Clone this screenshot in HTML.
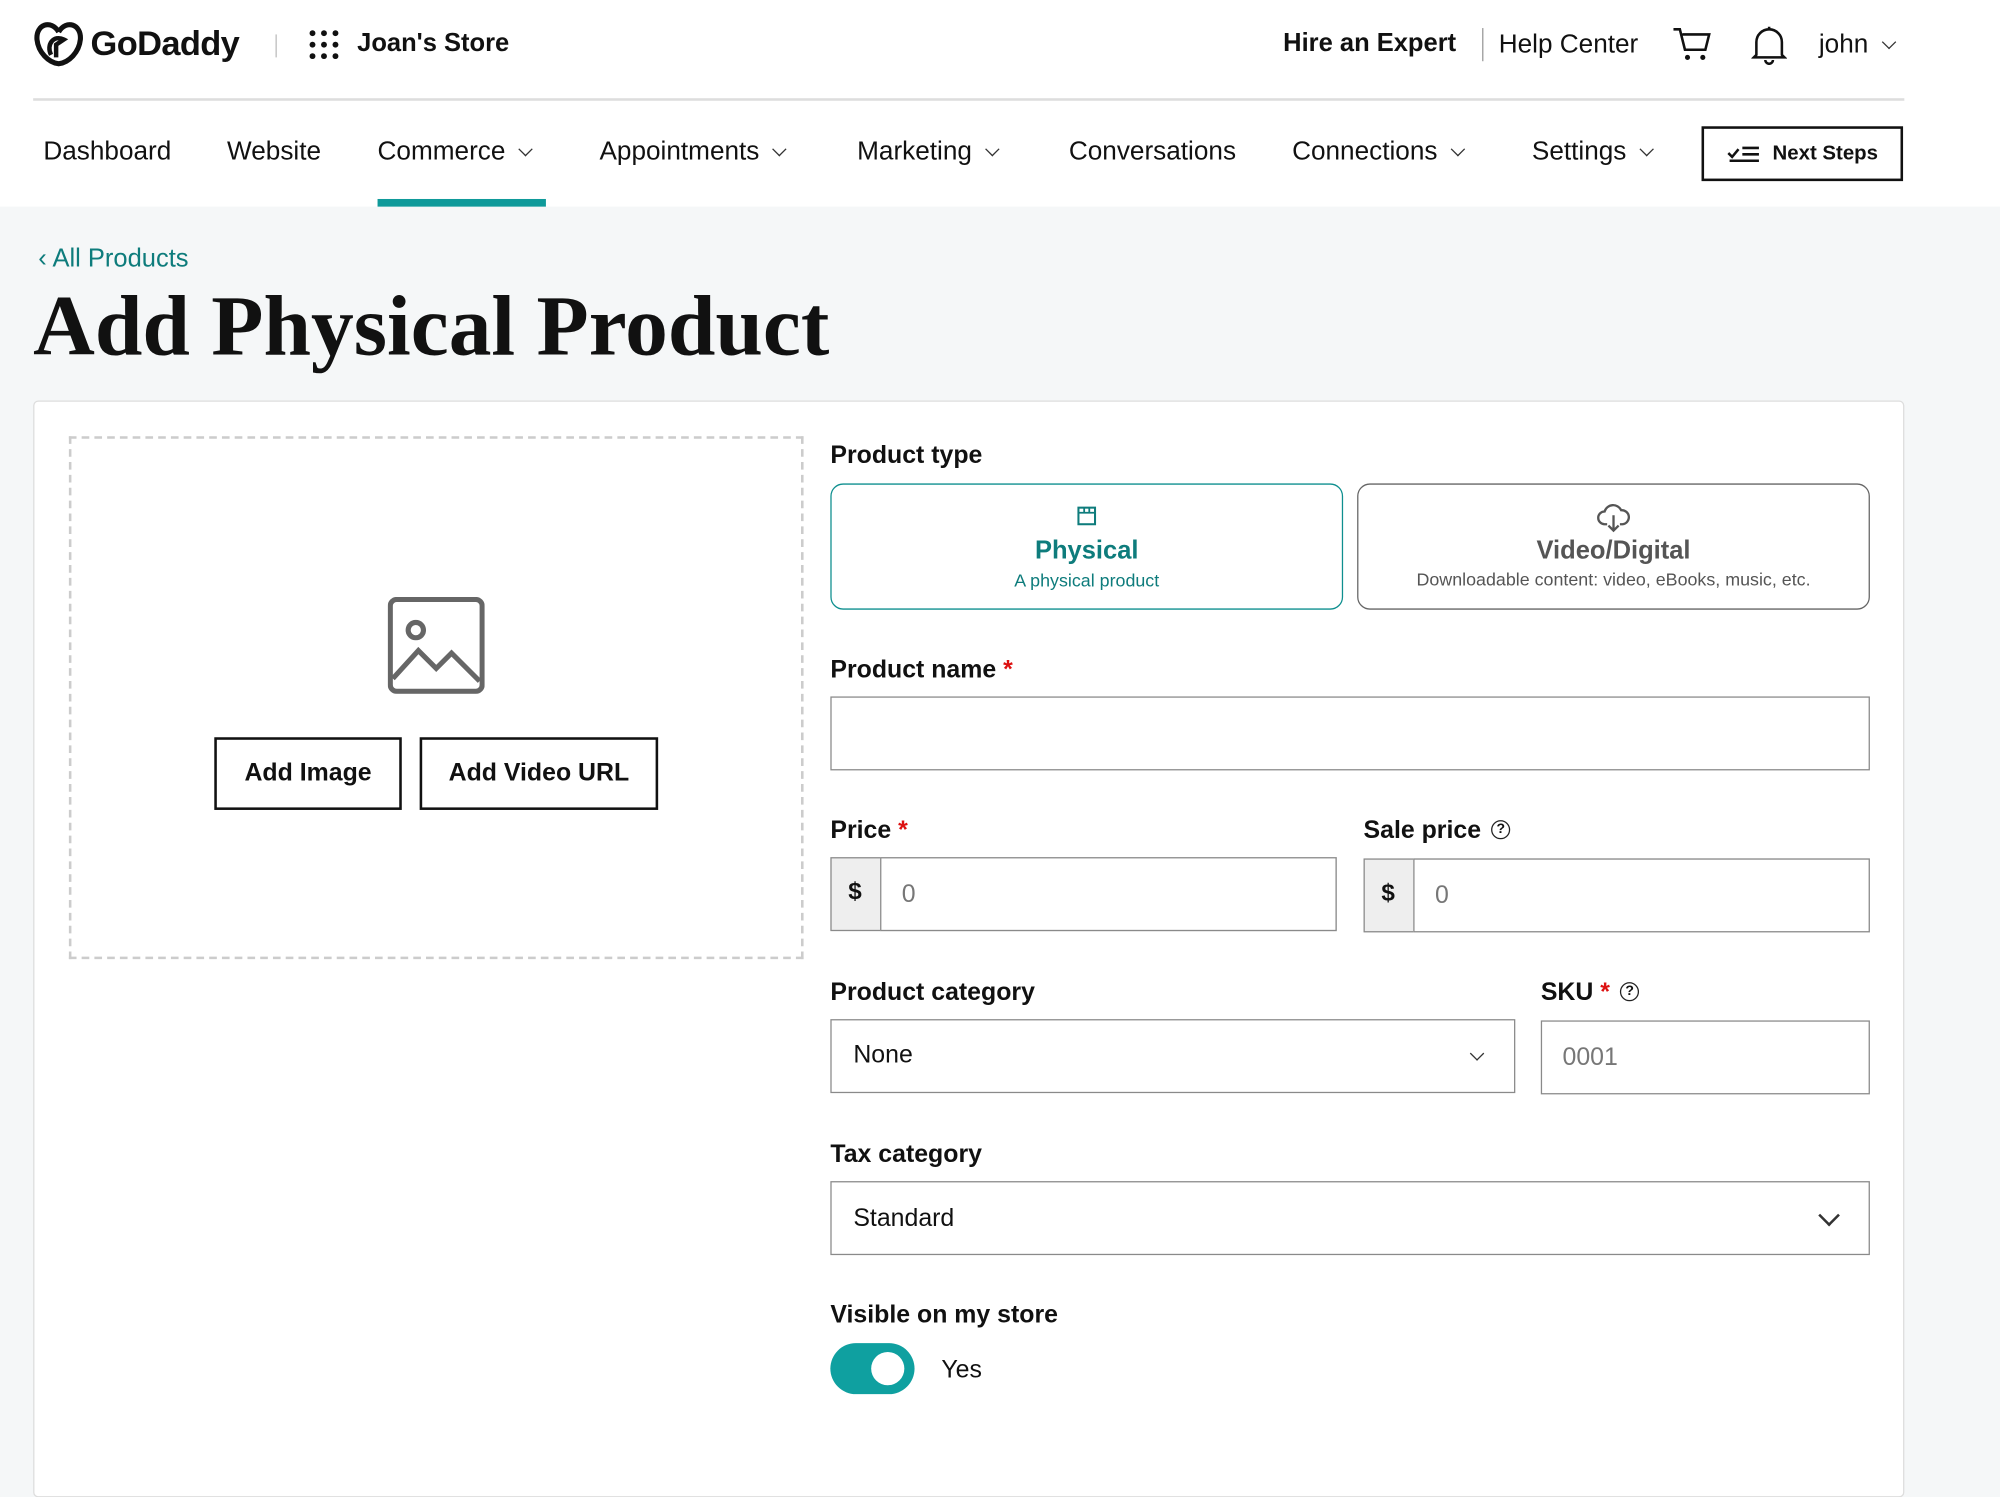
<!DOCTYPE html>
<html><head><meta charset="utf-8">
<style>
*{box-sizing:border-box;margin:0;padding:0}
html,body{width:2000px;height:1482px;overflow:hidden;background:#f5f7f8}
#w{position:absolute;left:0;top:0;width:1568px;height:1162px;transform:scale(1.27551);transform-origin:0 0;font-family:"Liberation Sans",sans-serif;color:#111}
.a{position:absolute;white-space:nowrap}
.nav{font-size:20.5px;color:#111;top:107px}
.lbl{font-size:19.5px;font-weight:bold;color:#111}
.req{color:#d11}
.inp{position:absolute;background:#fff;border:1px solid #8a8a8a}
.ph{font-size:19.5px;color:#777}
.chev{display:inline-block;width:8px;height:8px;border-right:1.5px solid #333;border-bottom:1.5px solid #333;transform:rotate(45deg);margin-left:12px;position:relative;top:-4px}
.btn{position:absolute;border:2px solid #111;background:#fff;font-size:19.5px;font-weight:bold;display:flex;align-items:center;justify-content:center}
.q{display:inline-block;width:15px;height:15px;border:1.5px solid #222;border-radius:50%;font-size:11px;text-align:center;line-height:13px;font-weight:bold;vertical-align:4px;margin-left:8px}
</style></head><body><div id="w">
<div class="a" style="left:0;top:0;width:1568px;height:162px;background:#fff"></div>
<svg class="a" style="left:26px;top:17px" width="40" height="36" viewBox="0 0 40 36"><path d="M20 8C14-2 2 2 3 14c1 10 9 18 17 19 8-1 16-9 17-19 1-12-11-16-17-6" fill="none" stroke="#111" stroke-width="4"/><path d="M14 26c-4-8 2-16 10-12l-6 4v10" fill="none" stroke="#111" stroke-width="3.5"/></svg>
<div class="a" style="left:71px;top:19px;font-size:27px;font-weight:bold;letter-spacing:-0.5px">GoDaddy</div>
<div class="a" style="left:216px;top:27px;width:1px;height:18px;background:#bbb"></div>
<svg class="a" style="left:242px;top:23px" width="24" height="24"><g fill="#111"><circle cx="3" cy="3" r="2.3"/><circle cx="12" cy="3" r="2.3"/><circle cx="21" cy="3" r="2.3"/><circle cx="3" cy="12" r="2.3"/><circle cx="12" cy="12" r="2.3"/><circle cx="21" cy="12" r="2.3"/><circle cx="3" cy="21" r="2.3"/><circle cx="12" cy="21" r="2.3"/><circle cx="21" cy="21" r="2.3"/></g></svg>
<div class="a" style="left:280px;top:23px;font-size:20px;font-weight:bold">Joan's Store</div>
<div class="a" style="left:1006px;top:23px;font-size:20px;font-weight:bold">Hire an Expert</div>
<div class="a" style="left:1162px;top:22px;width:1px;height:26px;background:#999"></div>
<div class="a" style="left:1175px;top:23px;font-size:20.5px">Help Center</div>
<svg class="a" style="left:1311px;top:21px" width="32" height="28" viewBox="0 0 32 28"><path d="M1 2h5l4 16h16l3-12H8" fill="none" stroke="#111" stroke-width="2"/><circle cx="12" cy="24" r="2" fill="#111"/><circle cx="24" cy="24" r="2" fill="#111"/></svg>
<svg class="a" style="left:1373px;top:19px" width="28" height="32" viewBox="0 0 28 32"><path d="M4 24V14a10 10 0 0 1 20 0v10l2 2H2z M11 28a3 3 0 0 0 6 0 M14 2v2" fill="none" stroke="#111" stroke-width="2"/></svg>
<div class="a" style="left:1426px;top:23px;font-size:20.5px">john<span class="chev"></span></div>
<div class="a" style="left:26px;top:77px;width:1467px;height:2px;background:#ddd"></div>
<div class="a nav" style="left:34px">Dashboard</div>
<div class="a nav" style="left:178px">Website</div>
<div class="a nav" style="left:296px">Commerce<span class="chev"></span></div>
<div class="a" style="left:296px;top:156px;width:132px;height:6px;background:#0f9a9a"></div>
<div class="a nav" style="left:470px">Appointments<span class="chev"></span></div>
<div class="a nav" style="left:672px">Marketing<span class="chev"></span></div>
<div class="a nav" style="left:838px">Conversations</div>
<div class="a nav" style="left:1013px">Connections<span class="chev"></span></div>
<div class="a nav" style="left:1201px">Settings<span class="chev"></span></div>
<div class="btn" style="left:1334px;top:99px;width:158px;height:43px;font-size:16px"><svg width="26" height="16" style="margin-right:10px"><path d="M1 7l3 3 5-6M12 3h13M12 8h13M2 13h23" stroke="#111" stroke-width="2" fill="none"/></svg>Next Steps</div>
<div class="a" style="left:30px;top:192px;font-size:20px;color:#0e7c7c">‹ All Products</div>
<div class="a" style="left:26px;top:218px;font-family:'Liberation Serif',serif;font-size:67px;font-weight:bold;letter-spacing:0px">Add Physical Product</div>
<div class="a" style="left:26px;top:314px;width:1467px;height:860px;background:#fff;border:1px solid #ddd;border-radius:4px"></div>
<div class="a" style="left:54px;top:342px;width:576px;height:410px;border:2px dashed #ccc"></div>
<svg class="a" style="left:304px;top:468px" width="76" height="76" viewBox="0 0 76 76"><rect x="2" y="2" width="72" height="72" rx="5" fill="none" stroke="#666" stroke-width="4"/><circle cx="22" cy="26" r="6" fill="none" stroke="#666" stroke-width="4"/><path d="M4 64l20-22 14 14 12-12 22 22" fill="none" stroke="#666" stroke-width="4"/></svg>
<div class="btn" style="left:168px;top:578px;width:147px;height:57px">Add Image</div>
<div class="btn" style="left:329px;top:578px;width:187px;height:57px">Add Video URL</div>
<div class="a lbl" style="left:651px;top:346px">Product type</div>
<div class="a" style="left:651px;top:379px;width:402px;height:99px;border:1.5px solid #0e8f8f;border-radius:10px;text-align:center;background:#fff">
<svg width="16" height="16" style="margin-top:16px"><rect x="1.5" y="2" width="13" height="13" fill="none" stroke="#0e7c7c" stroke-width="1.6"/><path d="M1.5 6h13M6 2v4M10 2v4" stroke="#0e7c7c" stroke-width="1.4"/></svg>
<div style="font-size:20px;font-weight:bold;color:#0e7c7c;margin-top:4px">Physical</div>
<div style="font-size:14px;color:#0e7c7c;margin-top:3px">A physical product</div></div>
<div class="a" style="left:1064px;top:379px;width:402px;height:99px;border:1.5px solid #666;border-radius:10px;text-align:center;background:#fff">
<svg width="28" height="24" style="margin-top:14px" viewBox="0 0 28 24"><path d="M9 17H7a5 5 0 0 1 0-10 7 7 0 0 1 13-1 5 5 0 0 1 1 11h-2M14 10v12M10 18l4 4 4-4" fill="none" stroke="#555" stroke-width="1.8"/></svg>
<div style="font-size:20px;font-weight:bold;color:#555;margin-top:-2px">Video/Digital</div>
<div style="font-size:14px;color:#555;margin-top:2px">Downloadable content: video, eBooks, music, etc.</div></div>
<div class="a lbl" style="left:651px;top:514px">Product name <span class="req">*</span></div>
<div class="inp" style="left:651px;top:546px;width:815px;height:58px"></div>
<div class="a lbl" style="left:651px;top:640px">Price <span class="req">*</span></div>
<div class="inp" style="left:651px;top:672px;width:397px;height:58px;background:#eee"></div>
<div class="a" style="left:665px;top:689px;font-size:19px;font-weight:bold">$</div>
<div class="inp" style="left:690px;top:672px;width:358px;height:58px"><span class="ph" style="position:absolute;left:16px;top:17px">0</span></div>
<div class="a lbl" style="left:1069px;top:640px">Sale price<span class="q">?</span></div>
<div class="inp" style="left:1069px;top:673px;width:397px;height:58px;background:#eee"></div>
<div class="a" style="left:1083px;top:690px;font-size:19px;font-weight:bold">$</div>
<div class="inp" style="left:1108px;top:673px;width:358px;height:58px"><span class="ph" style="position:absolute;left:16px;top:17px">0</span></div>
<div class="a lbl" style="left:651px;top:767px">Product category</div>
<div class="inp" style="left:651px;top:799px;width:537px;height:58px"><span style="position:absolute;left:17px;top:16px;font-size:19.5px">None</span><span class="chev" style="position:absolute;left:490px;top:22px"></span></div>
<div class="a lbl" style="left:1208px;top:767px">SKU <span class="req">*</span><span class="q">?</span></div>
<div class="inp" style="left:1208px;top:800px;width:258px;height:58px"><span class="ph" style="position:absolute;left:16px;top:17px">0001</span></div>
<div class="a lbl" style="left:651px;top:894px">Tax category</div>
<div class="inp" style="left:651px;top:926px;width:815px;height:58px"><span style="position:absolute;left:17px;top:17px;font-size:19.5px">Standard</span><span class="chev" style="position:absolute;left:764px;top:20px;width:12px;height:12px;border-width:2px"></span></div>
<div class="a lbl" style="left:651px;top:1020px">Visible on my store</div>
<div class="a" style="left:651px;top:1053px;width:66px;height:40px;border-radius:20px;background:#0fa0a0"><div style="position:absolute;left:32px;top:7px;width:26px;height:26px;border-radius:50%;background:#fff"></div></div>
<div class="a" style="left:738px;top:1063px;font-size:19.5px">Yes</div>
</div></body></html>
